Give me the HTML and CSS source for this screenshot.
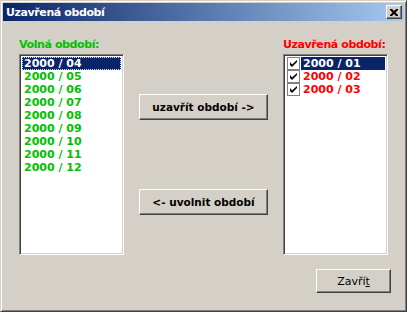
FILE: index.html
```html
<!doctype html>
<html lang="cs">
<head>
  <meta charset="UTF-8">
  <title>Uzavřená období</title>
  <link rel="stylesheet" href="styles.css">
</head>
<body>
  <div class="window">
    <div class="titlebar">
      <span class="title">Uzavřená období</span>
      <button class="close" type="button">
        <svg viewBox="0 0 8 7" width="8" height="7">
          <path d="M0,0h2l2,2l2,-2h2v1l-2.5,2.5l2.5,2.5v1h-2l-2,-2l-2,2h-2v-1l2.5,-2.5l-2.5,-2.5z"/>
        </svg>
      </button>
    </div>

    <div class="content">
      <div class="columns">
        <div class="col">
          <div class="label free">Volná období:</div>
          <ul class="listbox free">
            <li class="selected focused">2000 / 04</li>
            <li>2000 / 05</li>
            <li>2000 / 06</li>
            <li>2000 / 07</li>
            <li>2000 / 08</li>
            <li>2000 / 09</li>
            <li>2000 / 10</li>
            <li>2000 / 11</li>
            <li>2000 / 12</li>
          </ul>
        </div>

        <div class="actions">
          <button class="btn" type="button">uzavřít období -&gt;</button>
          <button class="btn" type="button">&lt;- uvolnit období</button>
        </div>

        <div class="col">
          <div class="label closed">Uzavřená období:</div>
          <ul class="listbox closed">
            <li><span class="check"><svg viewBox="0 0 7 7" width="7" height="7"><path d="M0,2v3l2,2l5,-5v-2l-5,4.5z"/></svg></span><span class="text selected">2000 / 01</span></li>
            <li><span class="check"><svg viewBox="0 0 7 7" width="7" height="7"><path d="M0,2v3l2,2l5,-5v-2l-5,4.5z"/></svg></span><span class="text">2000 / 02</span></li>
            <li><span class="check"><svg viewBox="0 0 7 7" width="7" height="7"><path d="M0,2v3l2,2l5,-5v-2l-5,4.5z"/></svg></span><span class="text">2000 / 03</span></li>
          </ul>
        </div>
      </div>

      <div class="footer">
        <button class="btn btn-close" type="button">Zavří<u>t</u></button>
      </div>
    </div>
  </div>
</body>
</html>
```

FILE: styles.css
```css
:root {
  --face: #d4d0c8;
  --shadow: #808080;
  --dark: #404040;
  --navy: #0a246a;
  --free: #00c000;
  --closed: #ff0000;
}

* {
  box-sizing: border-box;
  margin: 0;
  padding: 0;
}

body {
  background: var(--face);
  font-family: "DejaVu Sans", Verdana, sans-serif;
  font-size: 11px;
}

.window {
  width: 407px;
  height: 312px;
  background: var(--face);
  border: 1px solid;
  border-color: var(--face) var(--dark) var(--dark) var(--face);
  padding: 1px;
  box-shadow: inset 1px 1px #fff, inset -1px -1px var(--shadow);
}

.window > * {
  margin: 0 1px;
}

.titlebar {
  height: 18px;
  margin-top: 1px;
  display: flex;
  align-items: center;
  justify-content: space-between;
  padding: 0 2px 0 3px;
  background: linear-gradient(90deg, var(--navy) 0%, #a6caf0 100%);
}

.title {
  color: #fff;
  font-weight: bold;
  font-size: 11px;
  letter-spacing: -0.4px;
}

.close {
  width: 16px;
  height: 14px;
  display: flex;
  align-items: center;
  justify-content: center;
  background: var(--face);
  border: 1px solid;
  border-color: #fff var(--dark) var(--dark) #fff;
  box-shadow: inset -1px -1px var(--shadow);
}

.close svg {
  fill: #000;
}

.content {
  padding: 17px 0 0 16px;
}

.columns {
  display: flex;
  gap: 15px;
}

.col {
  width: 105px;
}

.label {
  font-weight: bold;
  line-height: 13px;
  height: 16px;
  white-space: nowrap;
  letter-spacing: -0.4px;
}

.label.free { color: var(--free); }
.label.closed { color: var(--closed); }

.listbox {
  list-style: none;
  width: 105px;
  height: 201px;
  background: #fff;
  border: 1px solid;
  border-color: var(--shadow) #fff #fff var(--shadow);
  box-shadow: inset 1px 1px var(--dark), inset -1px -1px var(--face);
  padding: 2px;
  font-weight: bold;
  line-height: 13px;
}

.listbox.free li {
  color: var(--free);
  padding-left: 2px;
  height: 13px;
}

.listbox.free li.selected {
  background: var(--navy);
  color: #fff;
}

.listbox.free li.focused {
  outline: 1px dotted #f0e8a0;
  outline-offset: -1px;
}

.listbox.closed li {
  display: flex;
  align-items: center;
  height: 13px;
  color: var(--closed);
  padding-left: 1px;
}

.check {
  width: 13px;
  height: 13px;
  flex: none;
  display: flex;
  align-items: center;
  justify-content: center;
  border: 1px solid var(--shadow);
  background: #fff;
}

.check svg {
  fill: #000;
}

.listbox.closed .text {
  flex: 1;
  padding-left: 2px;
  margin-left: 1px;
}

.listbox.closed .text.selected {
  background: var(--navy);
  color: #fff;
}

.actions {
  display: flex;
  flex-direction: column;
  padding-top: 56px;
  gap: 69px;
}

.btn {
  width: 129px;
  height: 26px;
  background: var(--face);
  border: 1px solid;
  border-color: #fff var(--dark) var(--dark) #fff;
  box-shadow: inset -1px -1px var(--shadow);
  font-family: "DejaVu Sans", Verdana, sans-serif;
  font-size: 10.5px;
  font-weight: bold;
  color: #000;
}

.footer {
  display: flex;
  justify-content: flex-end;
  padding: 14px 13px 0 0;
}

.btn-close {
  width: 75px;
  height: 24px;
  font-size: 11px;
  font-weight: normal;
}
```
